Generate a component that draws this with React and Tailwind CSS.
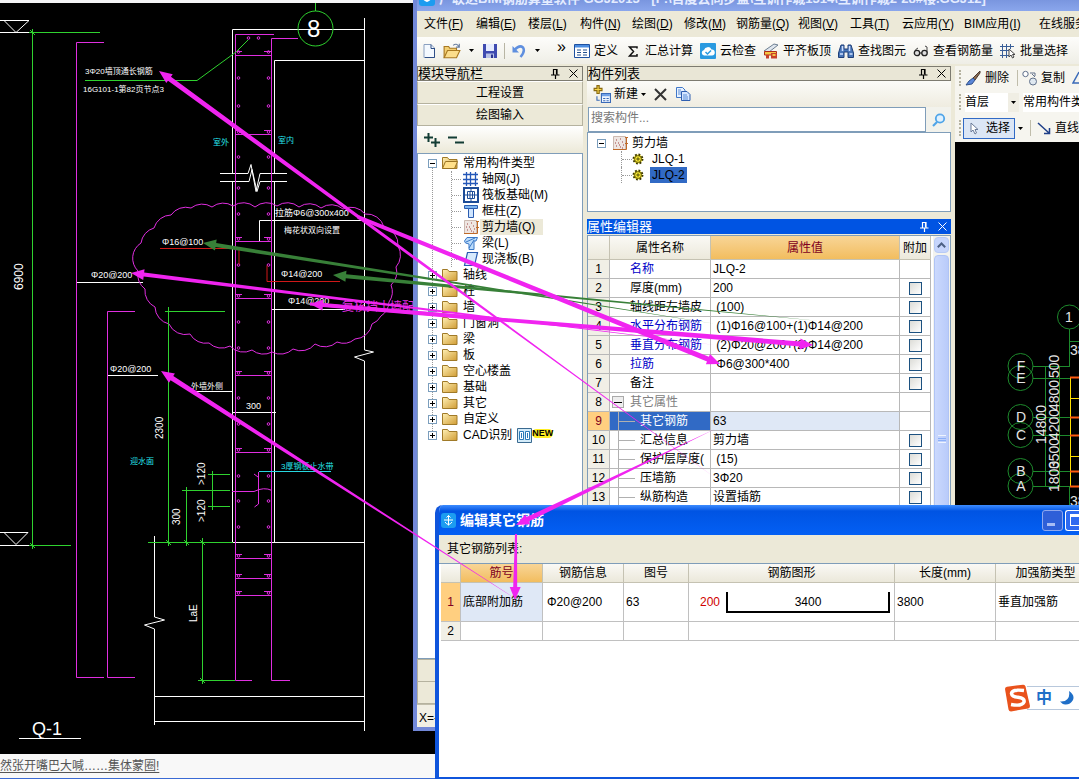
import React, { useState } from "react";

const MENUS = [
  { name: "文件", key: "F" },
  { name: "编辑", key: "E" },
  { name: "楼层", key: "L" },
  { name: "构件", key: "N" },
  { name: "绘图", key: "D" },
  { name: "修改", key: "M" },
  { name: "钢筋量", key: "Q", wide: true },
  { name: "视图", key: "V" },
  { name: "工具", key: "T" },
  { name: "云应用", key: "Y", wide: true },
  { name: "BIM应用", key: "I", widest: true },
  { name: "在线服务", key: "S", widest: true },
];

const COMPONENT_TYPES = [
  { label: "轴网(J)", icon: "grid" },
  { label: "筏板基础(M)", icon: "raft" },
  { label: "框柱(Z)", icon: "column" },
  { label: "剪力墙(Q)", icon: "wall", active: true },
  { label: "梁(L)", icon: "beam" },
  { label: "现浇板(B)", icon: "slab" },
];

const GROUPS = [
  "轴线",
  "柱",
  "墙",
  "门窗洞",
  "梁",
  "板",
  "空心楼盖",
  "基础",
  "其它",
  "自定义",
  "CAD识别",
];

const PROPERTIES = [
  { name: "名称", value: "JLQ-2", blue: true, noCheck: true },
  { name: "厚度(mm)", value: "200" },
  { name: "轴线距左墙皮", value: " (100)" },
  { name: "水平分布钢筋", value: " (1)Φ16@100+(1)Φ14@200", blue: true },
  { name: "垂直分布钢筋", value: " (2)Φ20@200+(2)Φ14@200", blue: true },
  { name: "拉筋", value: " Φ6@300*400", blue: true },
  { name: "备注", value: "" },
  { name: "其它属性", value: "", group: true, noCheck: true },
  { name: "其它钢筋", value: "63", child: true, active: true, noCheck: true },
  { name: "汇总信息", value: "剪力墙", child: true },
  { name: "保护层厚度(", value: " (15)", child: true },
  { name: "压墙筋", value: "3Φ20", child: true },
  { name: "纵筋构造", value: "设置插筋", child: true },
  { name: "插筋信息", value: "", child: true },
];

/* ---------- icons ---------- */

const Icon = ({ children, size = 16 }) => (
  <svg width={size} height={size} viewBox="0 0 16 16" className="shrink-0" aria-hidden="true">
    {children}
  </svg>
);

const NewFileIcon = () => (
  <Icon>
    <path d="M3 1.500h7l3.500 3.500v9.500H3z" fill="#f4f9ff" stroke="#8aa0c0" />
    <path d="M10 1.500v4h3.500M13.500 5v9.500H4" fill="none" stroke="#2f4f87" />
  </Icon>
);

const OpenIcon = () => (
  <Icon size={18}>
    <path d="M1 14V4h4l1 1.500h6V8" fill="#f3cf72" stroke="#a87820" />
    <path d="M1 14l3-6.500h11L12 14z" fill="#fbdd8c" stroke="#a87820" />
    <path d="M9 3q3-2.500 5 1M14.500 1.500V4.500H11.500" fill="none" stroke="#6a7fa0" />
  </Icon>
);

const SaveIcon = () => (
  <Icon>
    <path d="M1 1h14v14H1z" fill="#3f4bb0" />
    <path d="M4 1h8v7H4z" fill="#e6ecff" />
    <path d="M4 10.500h8V15H4z" fill="#b9c2e6" />
    <path d="M9 11.500h2V15H9z" fill="#2a3390" />
  </Icon>
);

const UndoIcon = () => (
  <Icon>
    <path d="M4 6.500Q8.500 1.500 12 4.500Q14.500 8.500 9.500 14" fill="none" stroke="#5f8fdf" strokeWidth="2.500" />
    <path d="M1.500 3v6.500H8z" fill="#5f8fdf" />
  </Icon>
);

const DefineIcon = () => (
  <Icon>
    <path d="M.5 1.500h15v13H.5z" fill="#fff" stroke="#1d50a0" />
    <path d="M1 2h14v2.500H1z" fill="#4b8ce0" />
    <path d="M3 7h4M3 9.500h4M3 12h4M9 7h4M9 9.500h4M9 12h4" stroke="#22508f" />
  </Icon>
);

const CloudIcon = () => (
  <Icon>
    <rect width="16" height="16" rx="1" fill="#2a9ae0" />
    <path d="M4 12.500a2.800 2.800 0 0 1 0-5.500a4 4 0 0 1 7.500-.5a3 3 0 0 1 .5 6z" fill="#fff" />
    <path d="M5.500 9l2 2 3.500-3.500" fill="none" stroke="#2a9ae0" strokeWidth="1.500" />
  </Icon>
);

const AlignSlabIcon = () => (
  <Icon>
    <path d="M1 8L11 1l4 1-9 7z" fill="#dfe6ee" stroke="#6d7f92" />
    <path d="M1.500 8.500h12V12h-12z" fill="#f4c542" stroke="#b02a1a" />
    <path d="M3 12h3v3.500H3zM8 10h6v5.500H8z" fill="#c8402a" />
    <path d="M9.500 11h3v2h-3z" fill="#f4c542" />
  </Icon>
);

const BinocularsIcon = () => (
  <Icon>
    <path d="M3 2h3v4h4V2h3l2.500 8v4.500h-5.500V9H6v5.500H.5V10z" fill="#4775b8" stroke="#1f3f78" />
    <path d="M2 11h3M11.500 11h3M4.500 3v5M11.500 3v5" stroke="#cfe0ff" strokeWidth="1.500" />
  </Icon>
);

const GlassesIcon = () => (
  <Icon>
    <path d="M2 9q0-3 3-4M14 10V4l-2-1" fill="none" stroke="#444" />
    <circle cx="4" cy="10" r="2.700" fill="#ddd" stroke="#222" strokeWidth="1.300" />
    <circle cx="11.500" cy="10" r="2.700" fill="#ddd" stroke="#222" strokeWidth="1.300" />
    <path d="M6.500 10h2.500" stroke="#222" />
  </Icon>
);

const BatchIcon = () => (
  <Icon>
    <path d="M0 3.500h14M0 7.500h9M0 12.500h9M2.500 1v14M6.500 1v14M10.500 1v5" stroke="#3a5f98" />
    <path d="M9 6v8l2-2 1.500 3 1.500-1-1.500-2.500H15z" fill="#fff" stroke="#444" />
  </Icon>
);

const SigmaIcon = () => (
  <Icon>
    <path d="M12 5.500V4H4.500l4 4.500-4 4.500H12v-2" fill="none" stroke="#111" strokeWidth="1.500" />
  </Icon>
);

const AddComponentIcon = () => (
  <Icon size={18}>
    <path d="M3.500.5h2v2.500H8v2H5.500v2.500h-2V5H1V3h2.500z" fill="#f6d64a" stroke="#8a6a10" />
    <path d="M7.500 7.500h8v8h-8z" fill="#eef5ff" stroke="#3a6ab8" />
    <path d="M8 8h7v2H8z" fill="#6ea0e8" />
    <path d="M9 12h2M12 12h2M9 14h2M12 14h2M3.500 10v3.500H6" fill="none" stroke="#3a6ab8" />
  </Icon>
);

const CopyIcon = () => (
  <Icon>
    <path d="M1.500 1.500h6L10 4v7.500H1.500z" fill="#e8f2ff" stroke="#3f77c8" />
    <path d="M6.500 5.500h5.500l3 3v6H6.500z" fill="#d5e6ff" stroke="#2f5fb0" />
    <path d="M8 9h4M8 11h5M8 13h5M3 4h3M3 6h3M3 8h3" stroke="#5c8fd8" />
  </Icon>
);

const FolderIcon = ({ open }) => (
  <Icon>
    <defs>
      <linearGradient id="folderFill" x2="1" y2="1">
        <stop stopColor="#fff0b4" />
        <stop offset="1" stopColor="#d09c34" />
      </linearGradient>
    </defs>
    <path d="M.5 13.500v-11h5l1.500 2h8v9z" fill="url(#folderFill)" stroke="#a07a28" />
    {open && <path d="M.5 13.500l3-7h12l-3 7z" fill="#ffe08a" stroke="#9a7424" />}
  </Icon>
);

const TypeIcon = ({ type }) => {
  if (type === "grid")
    return (
      <Icon>
        <path d="M0 3.500h15M0 8.500h15M0 12.500h15M3.500 1v14M7.500 1v14M12.500 1v14" stroke="#2457b8" strokeWidth="1.300" />
      </Icon>
    );
  if (type === "raft")
    return (
      <Icon>
        <path d="M1 1h14v14H1z" fill="#fff" stroke="#1d4c98" strokeWidth="2" />
        <path d="M4.500 4.500h7v7h-7zM1 8h3.500M11.500 8H15M8 1v3.500M8 11.500V15M7 5v6M9.500 5v6M5 8h6" fill="none" stroke="#1d4c98" />
      </Icon>
    );
  if (type === "column")
    return (
      <Icon>
        <path d="M1.500 2.500h13v3h-13z" fill="#7db4ef" stroke="#2a5cb0" />
        <path d="M5.500 5.500h5v9h-5z" fill="#cfe5ff" stroke="#2a5cb0" />
      </Icon>
    );
  if (type === "wall")
    return (
      <Icon>
        <path d="M1.500 1.500h12v13h-12z" fill="#eee6e2" stroke="#cbb9b0" />
        <path d="M4 5h1M8 4h1M6 8h1M10 7h1M4 11h1M8 12h1M11 10h1M7 10h1M3 8h1M10 13h1" stroke="#a04040" />
        <path d="M1 14.500h13.500V2M13 2.500h3M13 8.500h3" fill="none" stroke="#c06a28" />
      </Icon>
    );
  if (type === "beam")
    return (
      <Icon>
        <path d="M1.500 6L4 2.500h10.500L13 6h-2v8.500H6V9L2.500 8z" fill="#bcdcfa" stroke="#3a78c8" />
        <path d="M3 7l9-4M6 13l5-8" stroke="#3a78c8" />
      </Icon>
    );
  return (
    <Icon>
      <path d="M4.500 1.500h10l-3 13h-10z" fill="#d7eafd" stroke="#2a5cb0" strokeWidth="1.200" />
    </Icon>
  );
};

const GearIcon = () => (
  <Icon size={12}>
    <circle cx="8" cy="8" r="6" fill="#ffee33" stroke="#3a3500" strokeWidth="2.500" strokeDasharray="2.400 2.300" />
    <circle cx="8" cy="8" r="4.500" fill="#ffee33" stroke="#3a3500" />
    <circle cx="8" cy="8" r="1.500" fill="none" stroke="#3a3500" strokeWidth="1.200" />
  </Icon>
);

const PinIcon = () => (
  <svg width="9" height="10" viewBox="0 0 9 10" aria-hidden="true">
    <path d="M2.500 0v5.500M6 0v5.500M2 .5h4.500M0 6h8.500M4.500 6v4M5.500 1v4" fill="none" stroke="currentColor" strokeWidth="1.200" />
  </svg>
);

const CloseIcon = () => (
  <svg width="9" height="9" viewBox="0 0 9 9" aria-hidden="true">
    <path d="M.5.5l8 8M8.500.5l-8 8" stroke="currentColor" />
  </svg>
);

const Caret = () => (
  <svg width="5" height="3" viewBox="0 0 5 3" className="shrink-0" aria-hidden="true">
    <path d="M0 0h5L2.500 3z" fill="#000" />
  </svg>
);

const Expander = ({ open }) => (
  <button
    aria-label={open ? "收起" : "展开"}
    className="relative flex h-[9px] w-[9px] shrink-0 items-center justify-center border border-[#7b9ebd] bg-white"
  >
    <svg width="5" height="5" viewBox="0 0 5 5">
      <path d={open ? "M0 2.500h5" : "M0 2.500h5M2.500 0v5"} stroke="#000" />
    </svg>
  </button>
);

/* ---------- CAD drawing ---------- */

const CLOUD_POINTS = [
  [154, 228], [171, 215], [191, 208], [212, 207], [233, 206], [255, 207], [277, 206],
  [299, 207], [321, 208], [343, 209], [365, 214], [384, 227], [398, 246], [396, 267],
  [391, 285], [389, 302], [381, 316], [372, 324], [355, 339], [337, 342], [315, 344],
  [293, 349], [272, 352], [252, 350], [230, 346], [209, 343], [190, 334], [169, 324],
  [155, 307], [145, 289], [138, 271], [141, 243],
];

const cloudPath =
  CLOUD_POINTS.map(([x, y], i) => (i === 0 ? `M${x} ${y}` : `A18 18 0 0 1 ${x} ${y}`)).join("") +
  "A18 18 0 0 1 154 228";

const DOT_ROWS = [52, 78, 106, 132, 157, 188, 214, 239, 265, 296, 322, 348, 373, 398, 424, 450, 476, 501, 527, 556, 576, 593];
const TIE_ROWS = [55, 134, 241, 298, 375, 452, 558, 578, 595];

const CadDrawing = () => (
  <svg
    width="415"
    height="751"
    viewBox="0 3 415 751"
    fill="none"
    className="font-['Liberation_Sans_Narrow','Liberation_Sans','Noto_Sans_CJK_SC',sans-serif]"
  >
    {/* levels and concrete outline */}
    <g stroke="#fff">
      <path d="M0 20.500h29M4 20.500l12 12 13-12M0 32.500h32M0 532.500h28M4 532.500l12 12 12-12M0 545.500h30" />
      <path d="M232.500 173V29.500H364.500M274.500 173V60.500H364.500M364.500 18V350l9 2-19 5 10 4V731" />
      <path d="M220 173.500h28l3-9 5 27 4-18h27M220 181.500h29l3-12 5 22 3-10h27" />
      <path d="M232.500 182V542M274.500 182V542M154.500 542.500H364.500M154.500 536v81l10 3-20 5 10 4v96M154.500 696.500H364.500M154.500 721.500H364.500" />
      <path d="M77 282.500h66M107 375.500h51M193 391.500h40M232 412.500h44M259.500 241v-20.500H364M272 309.500h73M19 738.500h62" />
    </g>

    {/* rebar */}
    <g stroke="#e02ee0">
      <path d="M104 42.500H76.500V677.500H104M135 311.500H107.500V677.500H135" />
      <path d="M274 34.500H235.500V680.500H252M298 38.500H271.500V680.500H290" />
      {TIE_ROWS.map((y) => (
        <path key={y} d={`M235 ${y}.5h36M235 ${y - 4}.5h7M264 ${y - 4}.5h7`} />
      ))}
      {DOT_ROWS.map((y) => (
        <g key={y}>
          <circle cx="238.500" cy={y} r="1.300" />
          <circle cx="268.500" cy={y} r="1.300" />
        </g>
      ))}
      <circle cx="248.500" cy="38" r="1.300" />
      <circle cx="258.500" cy="38" r="1.300" />
      <path d="M258.500 472v32l-4 3M254 474l4 3M232 491.500h22q10-5 18-1" />
      <path d={cloudPath} />
    </g>
    <path d="M160 248.500h79v16M340 281.500h-73v-16" stroke="#d01818" />

    {/* dimensions */}
    <g stroke="#2fd22f">
      <path d="M32.500 29V549M29 32.500h71M29 545.500h42M30 30l5 5M30 543l5 5" />
      <path d="M168.500 307V546M165 311.500h60M148 542.500h85M212.500 471v39M208 474.500h22M182 490.500h48M208 506.500h22M186.500 487v59M202.500 538v146M198 680.500h37" />
      <path d="M85 80.500h112L236 52l12-12M166 540l5 5M184 540l5 5M200 540l5 5M200 678l5 5" />
      <circle cx="315.500" cy="28.500" r="17.500" />
      <path d="M315.500 3v8" />
    </g>
    <path d="M259 471.500h72" stroke="#27d7e0" />

    <g fill="#fff" fontSize="9">
      <text x="307" y="37" fontSize="24">8</text>
      <text x="85" y="74" fontSize="8">3Φ20墙顶通长钢筋</text>
      <text x="83" y="92" fontSize="8">16G101-1第82页节点3</text>
      <text x="162" y="245">Φ16@100</text>
      <text x="91" y="278">Φ20@200</text>
      <text x="281" y="277">Φ14@200</text>
      <text x="288" y="304">Φ14@200</text>
      <text x="110" y="372">Φ20@200</text>
      <text x="275" y="216">拉筋Φ6@300x400</text>
      <text x="284" y="233" fontSize="8">梅花状双向设置</text>
      <text x="191" y="389" fontSize="8">外墙外侧</text>
      <text x="246" y="409">300</text>
      <text x="32" y="735" fontSize="18">Q-1</text>
      <text fontSize="12" transform="translate(23 290) rotate(-90)">6900</text>
      <text fontSize="10" transform="translate(163 439) rotate(-90)">2300</text>
      <text fontSize="10" transform="translate(180 525) rotate(-90)">300</text>
      <text fontSize="10" transform="translate(205 485) rotate(-90)">&gt;120</text>
      <text fontSize="10" transform="translate(205 522) rotate(-90)">&gt;120</text>
      <text fontSize="10" transform="translate(197 622) rotate(-90)">LaE</text>
    </g>
    <g fill="#27e6ee" fontSize="8">
      <text x="213" y="145">室外</text>
      <text x="278" y="143">室内</text>
      <text x="130" y="464">迎水面</text>
      <text x="281" y="469">3厚钢板止水带</text>
    </g>
    <text x="342" y="311" fontSize="12" fill="#e02ee0">复核挡土墙配</text>
  </svg>
);

const AXES = [
  ["F", 366],
  ["E", 378],
  ["D", 417],
  ["C", 435],
  ["B", 471],
  ["A", 486],
];

const PlanCanvas = () => (
  <svg width="125" height="420" viewBox="954 142 125 420" fill="none" className="font-['Liberation_Sans',sans-serif]">
    <g stroke="#1d8a2c">
      <circle cx="1068.500" cy="317" r="12" />
      <path d="M1068.500 329v37M1068.500 341.500h12M1044.500 366v120M1058.500 366v120M1068.500 486v30" />
      {AXES.map(([name, y]) => (
        <g key={name}>
          <circle cx="1019.500" cy={y} r="12.500" />
          <path d={`M1032 ${y}.5h37`} />
        </g>
      ))}
    </g>
    <g stroke="#ffe000">
      <path d="M1069.500 378v108M1070 398.500h10M1070 456.500h10" />
    </g>
    <path d="M1069 377.500h11M1069 417.500h11M1069 435.500h11M1069 471.500h11M1069 486.500h11" stroke="#ff5a10" strokeWidth="2" />
    <g fill="#e4e4e4" fontSize="14">
      <text x="1064" y="322">1</text>
      {AXES.map(([name, y]) => (
        <text key={name} x="1020" y={y + 5} textAnchor="middle">
          {name}
        </text>
      ))}
      <text x="1069" y="355">3800</text>
      <text x="1069" y="506">3800</text>
      <text transform="translate(1045 444) rotate(-90)">14800</text>
      <text transform="translate(1058 492) rotate(-90)">1800</text>
      <text transform="translate(1058 469) rotate(-90)">3500</text>
      <text transform="translate(1058 440) rotate(-90)">4200</text>
      <text transform="translate(1058 411) rotate(-90)">4800</text>
      <text transform="translate(1058 378) rotate(-90)">500</text>
    </g>
  </svg>
);

/* ---------- annotation arrows ---------- */

// tapered arrow: thin at the tail, `width` wide next to the head
const Arrow = ({ from, to, width = 5, tail = 1, head = 13, color = "#f024f0" }) => {
  const dx = to[0] - from[0];
  const dy = to[1] - from[1];
  const len = Math.hypot(dx, dy);
  const angle = (Math.atan2(dy, dx) * 180) / Math.PI;
  const neck = len - head;
  const half = head / 2 - 1;
  return (
    <path
      transform={`translate(${from[0]} ${from[1]}) rotate(${angle})`}
      d={`M0 ${-tail / 2}L${neck} ${-width / 2}V${-half}L${len} 0L${neck} ${half}V${width / 2}L0 ${tail / 2}z`}
      fill={color}
    />
  );
};

const Annotations = () => (
  <svg width="1079" height="779" viewBox="0 0 1079 779" className="pointer-events-none absolute left-0 top-0 z-20">
    <Arrow from={[820, 321]} to={[333, 275]} color="#388038" width={4} tail={0} />
    <Arrow from={[716, 324]} to={[203, 243]} color="#388038" width={4} tail={0} />
    <Arrow from={[714, 477]} to={[159, 71]} tail={0} />
    <Arrow from={[715, 345]} to={[131, 273]} width={4} tail={0} />
    <Arrow from={[500, 320]} to={[310, 304]} width={4} tail={4} />
    <Arrow from={[310, 304]} to={[813, 345]} tail={3} />
    <Arrow from={[358, 217]} to={[720, 364]} tail={4} />
    <Arrow from={[516, 599]} to={[161, 371]} tail={0} />
    <Arrow from={[715, 429]} to={[516, 525]} tail={0} />
    <Arrow from={[516, 534]} to={[515, 600]} width={4} tail={2} />
  </svg>
);

/* ---------- main window ---------- */

const PanelTitle = ({ children, active }) => (
  <div
    className={
      active
        ? "flex h-[15px] shrink-0 items-center justify-between bg-[#0054e3] pr-1 text-[13px] leading-[15px] text-white"
        : "flex h-[15px] shrink-0 items-center justify-between border border-[#7d7b70] bg-[#e9e6d6] pr-1 text-[13px] leading-[13px]"
    }
  >
    <h2>{children}</h2>
    <span className="flex items-center gap-[9px]">
      <button aria-label="固定">
        <PinIcon />
      </button>
      <button aria-label="关闭">
        <CloseIcon />
      </button>
    </span>
  </div>
);

const ToolButton = ({ icon, children }) => (
  <button className="flex shrink-0 items-center gap-1 whitespace-nowrap">
    {icon}
    {children}
  </button>
);

const MainToolbar = () => (
  <div className="flex h-[27px] shrink-0 items-center bg-gradient-to-b from-[#fdfdfb] to-[#efeee6] pl-1">
    <div className="flex w-[153px] shrink-0 items-center">
      <button aria-label="新建" className="mr-[6px]"><NewFileIcon /></button>
      <button aria-label="打开" className="mr-2"><OpenIcon /></button>
      <Caret />
      <button aria-label="保存" className="ml-2 border-r border-[#b8b5a4] pr-[6px]"><SaveIcon /></button>
      <button aria-label="撤销" className="ml-[6px] mr-2"><UndoIcon /></button>
      <Caret />
      <span className="ml-[17px] pb-2 text-base leading-4">»</span>
    </div>
    <div className="flex items-center gap-[7px]">
      <ToolButton icon={<DefineIcon />}>定义</ToolButton>
      <ToolButton icon={<SigmaIcon />}>汇总计算</ToolButton>
      <ToolButton icon={<CloudIcon />}>云检查</ToolButton>
      <ToolButton icon={<AlignSlabIcon />}>平齐板顶</ToolButton>
      <ToolButton icon={<BinocularsIcon />}>查找图元</ToolButton>
      <ToolButton icon={<GlassesIcon />}>查看钢筋量</ToolButton>
      <ToolButton icon={<BatchIcon />}>批量选择</ToolButton>
    </div>
  </div>
);

const Navigator = () => (
  <aside className="flex w-[166px] shrink-0 flex-col">
    <PanelTitle>模块导航栏</PanelTitle>
    <button className="h-[23px] shrink-0 border border-[#b5b29f] border-t-white bg-[#ece9d8]">工程设置</button>
    <button className="h-[22px] shrink-0 border border-[#b5b29f] border-t-white bg-[#ece9d8]">绘图输入</button>
    <div className="flex h-[27px] shrink-0 items-center gap-2 bg-gradient-to-b from-white to-[#ece9d8] pl-[7px]">
      <button aria-label="全部展开">
        <svg width="16" height="14" viewBox="0 0 16 14">
          <path d="M0 4.500h9M4.500 0v9M7 9.500h9M11.500 5v9" stroke="#123c34" strokeWidth="2" />
        </svg>
      </button>
      <button aria-label="全部收起">
        <svg width="16" height="14" viewBox="0 0 16 14">
          <path d="M0 4.500h9M7 9.500h9" stroke="#123c34" strokeWidth="2" />
        </svg>
      </button>
    </div>
    <div className="min-h-0 flex-1 border border-[#7f9db9] bg-white pl-[2px] pt-px">
      <ul className="relative before:absolute before:bottom-2 before:left-[12px] before:top-2 before:border-l before:border-dotted before:border-[#999]">
        <li>
          <div className="flex h-4 items-center gap-[5px] pl-2">
            <Expander open />
            <FolderIcon open />
            常用构件类型
          </div>
          <ul className="ml-[31px] border-l border-dotted border-[#999]">
            {COMPONENT_TYPES.map((t) => (
              <li key={t.label} className="flex h-4 items-center">
                <span className="mr-[2px] w-[9px] border-t border-dotted border-[#999]" />
                <TypeIcon type={t.icon} />
                <a
                  href="#"
                  className={t.active ? "ml-px bg-[#ece9d8] px-[2px] pr-2 leading-4" : "ml-px px-[2px] leading-4"}
                >
                  {t.label}
                </a>
              </li>
            ))}
          </ul>
        </li>
        {GROUPS.map((g) => (
          <li key={g} className="flex h-4 items-center gap-[5px] pl-2">
            <Expander />
            <FolderIcon />
            {g}
            {g === "CAD识别" && (
              <span className="flex items-center">
                <svg width="15" height="15" viewBox="0 0 15 15">
                  <path d="M.5.5h14v14H.5z" fill="#d4ecfa" stroke="#3a6a90" />
                  <path d="M2.500 3.500h4v8h-4zM8.500 3.500h4v8h-4zM4.500 5v5M10.500 5v5" fill="#fff" stroke="#2a7ab8" />
                </svg>
                <span className="mb-1 rounded-full bg-[#ffee22] text-[9px] font-bold leading-[9px]">NEW</span>
              </span>
            )}
          </li>
        ))}
      </ul>
    </div>
    <button aria-label="单构件输入" className="h-[23px] shrink-0 border border-[#b5b29f] bg-[#ece9d8]" />
    <button aria-label="报表预览" className="h-[22px] shrink-0 border border-[#b5b29f] border-t-0 bg-[#ece9d8]" />
  </aside>
);

const ComponentList = () => (
  <>
    <PanelTitle>构件列表</PanelTitle>
    <div className="flex h-[26px] shrink-0 items-center gap-2 bg-gradient-to-b from-[#fbfbf8] to-[#efece0] pl-[6px]">
      <button className="flex items-center gap-[3px]">
        <AddComponentIcon />
        新建
        <Caret />
      </button>
      <button aria-label="删除">
        <svg width="13" height="13" viewBox="0 0 13 13">
          <path d="M1 1l11 11M12 1L1 12" stroke="#333" strokeWidth="2" />
        </svg>
      </button>
      <button aria-label="复制构件">
        <CopyIcon />
      </button>
    </div>
    <div className="flex h-[25px] shrink-0">
      <input
        aria-label="搜索构件"
        placeholder="搜索构件..."
        className="ml-px min-w-0 flex-1 border border-[#7f9db9] bg-white px-[2px] pb-1 text-xs placeholder:text-[#777]"
      />
      <button aria-label="搜索" className="flex w-[25px] items-center justify-center bg-[#f2f2ec]">
        <svg width="14" height="14" viewBox="0 0 14 14">
          <circle cx="8" cy="5.500" r="4.200" fill="#dff1ff" stroke="#4fa4e8" strokeWidth="1.800" />
          <path d="M5 9l-4 4" stroke="#4fa4e8" strokeWidth="2.200" />
        </svg>
      </button>
    </div>
    <ul className="h-[80px] shrink-0 border border-[#7f9db9] bg-white pl-[9px] pt-[2px]">
      <li className="flex h-4 items-center">
        <Expander open />
        <span className="ml-[6px] mr-1">
          <TypeIcon type="wall" />
        </span>
        剪力墙
      </li>
      {["JLQ-1", "JLQ-2"].map((name) => (
        <li key={name} className="ml-6 flex h-4 items-center border-l border-dotted border-[#999]">
          <span className="w-[10px] border-t border-dotted border-[#999]" />
          <GearIcon />
          <a href="#" className={name === "JLQ-2" ? "ml-[6px] bg-[#316ac5] px-[2px] leading-4" : "ml-[6px] px-[2px] leading-4"}>
            {name}
          </a>
        </li>
      ))}
    </ul>
  </>
);

const PropertyRow = ({ row, index, checked, onToggle }) => {
  let nameCell = "border-b border-r border-[#b8b8b8] pl-5";
  if (row.blue) nameCell += " text-[#0000c8]";
  if (row.group) nameCell = "border-b border-r border-[#b8b8b8] pl-[2px] text-[#808080]";
  if (row.child) nameCell = "border-b border-r border-[#b8b8b8] pl-2";
  if (row.active) nameCell += " bg-[#316ac5] text-white";

  return (
    <tr className="h-[19px]">
      <th
        scope="row"
        className={
          row.active
            ? "border-b border-r border-[#b8b8b8] bg-[#ffcf80] font-normal text-[#800020]"
            : "border-b border-r border-[#b8b8b8] bg-[#f1efe6] font-normal"
        }
      >
        {index + 1}
      </th>
      <td className={nameCell}>
        <div className="flex h-[18px] items-center overflow-hidden whitespace-nowrap">
          {row.group && (
            <button aria-label="收起" className="mr-[6px] flex h-3 w-3 items-center justify-center border border-[#aaa] bg-[#eee]">
              <span className="h-px w-2 bg-black" />
            </button>
          )}
          {row.child && (
            <span className="mr-[5px] flex h-full w-[17px] shrink-0 items-center border-l border-[#b0b0b0]">
              <span className="w-full border-t border-[#b0b0b0]" />
            </span>
          )}
          {row.name}
        </div>
      </td>
      <td
        className={
          row.active
            ? "whitespace-pre border-b border-r border-[#b8b8b8] bg-[#dfe8f6] pl-[2px]"
            : "whitespace-pre border-b border-r border-[#b8b8b8] pl-[2px]"
        }
      >
        {row.value}
      </td>
      <td className="border-b border-r border-[#b8b8b8]">
        {!row.noCheck && (
          <input
            type="checkbox"
            aria-label={`附加 ${row.name}`}
            checked={checked}
            onChange={onToggle}
            className="mx-auto block h-[13px] w-[13px] appearance-none border border-[#1c5180] bg-gradient-to-br from-[#dcdcd7] to-white checked:bg-[#21a121]"
          />
        )}
      </td>
    </tr>
  );
};

const PropertyEditor = () => {
  const [extra, setExtra] = useState({});

  const toggle = (name) => setExtra({ ...extra, [name]: !extra[name] });

  return (
    <div className="mt-[7px] flex min-h-0 flex-1 flex-col">
      <PanelTitle active>属性编辑器</PanelTitle>
      <div className="mt-px flex min-h-0 flex-1 overflow-hidden border border-[#7f9db9] bg-white">
        <div className="min-w-0 flex-1">
          <table className="w-full table-fixed border-separate border-spacing-0 leading-4">
            <colgroup>
              <col className="w-[22px]" />
              <col className="w-[101px]" />
              <col />
              <col className="w-[31px]" />
            </colgroup>
            <thead>
              <tr className="h-[24px] bg-gradient-to-b from-[#faf9f5] to-[#ebe8da]">
                <th aria-label="序号" className="border-b border-r border-[#c5c2b2]" />
                <th className="border-b border-r border-[#c5c2b2] font-normal">属性名称</th>
                <th className="border-b border-r border-[#c5c2b2] bg-gradient-to-b from-[#f8d596] to-[#f2bd5e] font-normal text-[#800020]">
                  属性值
                </th>
                <th className="whitespace-nowrap border-b border-r border-[#c5c2b2] font-normal">附加</th>
              </tr>
            </thead>
            <tbody>
              {PROPERTIES.map((row, i) => (
                <PropertyRow
                  key={row.name}
                  row={row}
                  index={i}
                  checked={!!extra[row.name]}
                  onToggle={() => toggle(row.name)}
                />
              ))}
            </tbody>
          </table>
        </div>
        <div className="ml-[2px] flex w-[17px] flex-col bg-[#f3f3ee] px-px pt-px">
          <button aria-label="向上滚动" className="flex h-4 items-center justify-center rounded-sm border border-[#b7caf5] bg-[#c6d5fc]">
            <svg width="9" height="6" viewBox="0 0 9 6">
              <path d="M.8 5.200l3.700-3.700 3.700 3.700" fill="none" stroke="#4d6185" strokeWidth="2" />
            </svg>
          </button>
          <div className="mt-[2px] flex flex-1 justify-center rounded-sm border border-[#b0c4f4] bg-gradient-to-r from-[#cbd9fd] to-[#b9cbfa] pt-[179px]">
            <span className="h-2 w-2 border-y border-[#eef4fe]">
              <span className="mt-[2px] block h-[3px] border-y border-[#8cb0f8]" />
            </span>
          </div>
        </div>
      </div>
    </div>
  );
};

const Grip = () => <span className="h-4 shrink-0 border-l-2 border-dotted border-[#b5b2a0]" />;

const DrawingPane = () => (
  <section className="flex min-w-0 flex-1 flex-col overflow-hidden">
    <div className="flex h-[24px] shrink-0 items-center whitespace-nowrap bg-[#f6f5ef] pl-1">
      <Grip />
      <button className="ml-1 flex shrink-0 items-center gap-1">
        <Icon>
          <path d="M15 1l-7 7 2 2 5-7z" fill="#8a6a50" stroke="#4a3a30" />
          <path d="M8 8l2 2-3 4-6 1 3-4z" fill="#5a86d8" stroke="#30508a" />
        </Icon>
        删除
      </button>
      <button className="ml-2 flex shrink-0 items-center gap-[3px] border-l border-[#c0bdab] pl-1">
        <Icon>
          <circle cx="3.500" cy="4" r="2.700" fill="#fff" stroke="#60708a" />
          <circle cx="11" cy="11.500" r="3.500" fill="#dfe8f0" stroke="#60708a" />
          <path d="M8 3h5v3M10 4l3 3" fill="none" stroke="#60708a" />
        </Icon>
        复制
      </button>
      <svg width="16" height="16" viewBox="0 0 16 16" className="ml-[7px] shrink-0">
        <path d="M7 2L1 13h10" fill="none" stroke="#3a6ab8" strokeWidth="1.500" />
      </svg>
    </div>
    <div className="flex h-[24px] shrink-0 items-center whitespace-nowrap bg-[#f6f5ef] pl-1">
      <Grip />
      <select aria-label="楼层" className="ml-1 h-[19px] w-[43px] shrink-0 appearance-none bg-white">
        <option>首层</option>
      </select>
      <span className="flex h-[19px] w-[11px] shrink-0 items-center justify-center bg-[#f0eee4]">
        <Caret />
      </span>
      <select aria-label="构件类型" className="ml-1 h-[19px] w-[90px] shrink-0 appearance-none bg-white">
        <option>常用构件类型</option>
      </select>
    </div>
    <div className="flex h-[28px] shrink-0 items-center whitespace-nowrap bg-[#f6f5ef] pl-1">
      <Grip />
      <button className="ml-[2px] flex h-[21px] shrink-0 items-center gap-[6px] border border-[#316ac5] bg-[#dce6f5] pl-[5px] pr-1">
        <svg width="11" height="13" viewBox="0 0 11 13">
          <path d="M2 1v9l2-2 2 4 1.500-1L6 7.500h3z" fill="#fff" stroke="#6a7a98" />
        </svg>
        选择
      </button>
      <span className="mx-[3px]">
        <Caret />
      </span>
      <button className="ml-1 flex shrink-0 items-center gap-1 border-l border-[#c0bdab] pl-[6px]">
        <svg width="14" height="13" viewBox="0 0 14 13">
          <path d="M1 1l11 10M12.500 6v5.500H7" fill="none" stroke="#1f3f88" strokeWidth="1.500" />
        </svg>
        直线
      </button>
    </div>
    <div className="min-h-0 flex-1 overflow-hidden bg-black">
      <PlanCanvas />
    </div>
  </section>
);

const MainWindow = () => (
  <div className="absolute left-[413px] right-0 top-0 flex h-[731px] flex-col overflow-hidden border-b-4 border-l-4 border-[#7288d8] bg-[#ece9d8]">
    <header className="flex h-[11px] shrink-0 items-end overflow-hidden bg-gradient-to-b from-[#7a96df] to-[#8aa6ec] pb-[5px] pl-[2px] font-bold text-[#e4ecff]">
      <svg width="16" height="16" viewBox="0 0 16 16" className="shrink-0">
        <rect width="16" height="16" rx="3" fill="#1c9cf0" />
        <path d="M8 3v9M4 8q4 6 8 0" fill="none" stroke="#fff" strokeWidth="1.500" />
      </svg>
      <h1 className="ml-1 whitespace-pre text-[13px] leading-[15px]">
        广联达BIM钢筋算量软件 GGJ2013 - [F:\百度云同步盘\互训作城1314\互训作城2-28#楼.GGJ12]
      </h1>
    </header>
    <nav className="flex h-[26px] shrink-0 items-center overflow-hidden pl-[7px]">
      {MENUS.map((m) => (
        <button
          key={m.name}
          className={
            m.widest
              ? "w-[75px] shrink-0 whitespace-nowrap text-left"
              : m.wide
                ? "w-[62px] shrink-0 whitespace-nowrap text-left"
                : "w-[52px] shrink-0 whitespace-nowrap text-left"
          }
        >
          {m.name}(<u>{m.key}</u>)
        </button>
      ))}
    </nav>
    <MainToolbar />
    <div className="mt-[2px] flex min-h-0 flex-1">
      <Navigator />
      <section className="mx-1 flex w-[364px] shrink-0 flex-col">
        <ComponentList />
        <PropertyEditor />
      </section>
      <DrawingPane />
    </div>
    <footer className="h-[23px] shrink-0 border-t border-[#c0bdab] bg-[#f1efe4] px-[2px] leading-[26px]">X=-</footer>
  </div>
);

/* ---------- dialog ---------- */

const headCell = "border-b border-r border-[#c5c2b2] bg-gradient-to-b from-[#faf9f5] to-[#ebe8da] font-normal";
const bodyCell = "border-b border-r border-[#c0c0c0] pl-[2px]";

const RebarDialog = () => (
  <div
    role="dialog"
    aria-labelledby="rebar-title"
    className="absolute bottom-0 left-[435px] right-0 top-[505px] z-10 flex flex-col overflow-hidden rounded-tl-lg border-b-2 border-l-4 border-[#0f55dc] bg-white"
  >
    <div className="flex h-[30px] shrink-0 items-center bg-gradient-to-b from-[#3c8cff] via-[#0054e3] via-20% to-[#0460f4] pl-[2px]">
      <svg width="15" height="15" viewBox="0 0 15 15">
        <rect width="15" height="15" rx="3" fill="#1c9cf0" />
        <path d="M7.500 2.500v10M3 7h9M4 9q3.500 5 7 0M5.500 4.500l2-2 2 2" fill="none" stroke="#fff" />
      </svg>
      <h2 id="rebar-title" className="ml-1 flex-1 text-sm font-bold text-white">
        编辑其它钢筋
      </h2>
      <button aria-label="最小化" className="flex h-[21px] w-[21px] items-end rounded-[3px] border border-[#8fa8ee] bg-[#2f5fd8] p-1">
        <span className="h-[3px] w-2 bg-[#a8bcf4]" />
      </button>
      <button aria-label="最大化" className="ml-[2px] flex h-[21px] w-[14px] items-center overflow-hidden rounded-l-[3px] border border-r-0 border-white bg-[#2f6af0] pl-1">
        <span className="h-3 w-3 shrink-0 border border-t-[3px] border-white" />
      </button>
    </div>
    <p className="h-[28px] shrink-0 bg-[#ece9d8] pl-2 leading-[28px]">其它钢筋列表:</p>
    <div className="shrink-0 overflow-hidden border-t border-[#7f9db9] pl-[2px]">
      <table className="w-full table-fixed border-separate border-spacing-0 whitespace-nowrap leading-4">
        <colgroup>
          <col className="w-[20px]" />
          <col className="w-[82px]" />
          <col className="w-[81px]" />
          <col className="w-[65px]" />
          <col />
          <col className="w-[101px]" />
          <col className="w-[83px]" />
        </colgroup>
        <thead>
          <tr className="h-[19px]">
            <th aria-label="序号" className={headCell} />
            <th className="border-b border-r border-[#c5c2b2] bg-gradient-to-b from-[#f8d596] to-[#f2bd5e] font-normal text-[#800020]">
              筋号
            </th>
            <th className={headCell}>钢筋信息</th>
            <th className={headCell}>图号</th>
            <th className={headCell}>钢筋图形</th>
            <th className={headCell}>长度(mm)</th>
            <th className="border-b border-[#c5c2b2] bg-gradient-to-b from-[#faf9f5] to-[#ebe8da] pl-4 font-normal">加强筋类型</th>
          </tr>
        </thead>
        <tbody>
          <tr className="h-[39px]">
            <th scope="row" className="border-b border-r border-[#c0c0c0] bg-[#ffcf80] font-normal text-[#800020]">
              1
            </th>
            <td className="border-b border-r border-[#c0c0c0] bg-[#dfe8f6] pl-[2px]">底部附加筋</td>
            <td className="border-b border-r border-[#c0c0c0] pl-1">Φ20@200</td>
            <td className={bodyCell}>63</td>
            <td className="border-b border-r border-[#c0c0c0] pl-[11px] pr-1">
              <div className="flex items-center">
                <span className="w-[26px] shrink-0 text-[#d00000]">200</span>
                <span className="h-[21px] flex-1 border-2 border-t-0 border-black text-center leading-5">3400</span>
              </div>
            </td>
            <td className={bodyCell}>3800</td>
            <td className="border-b border-[#c0c0c0] pl-[2px]">垂直加强筋</td>
          </tr>
          <tr className="h-[19px]">
            <th scope="row" className="border-b border-r border-[#c0c0c0] bg-[#f1efe6] font-normal">
              2
            </th>
            <td className={bodyCell} />
            <td className={bodyCell} />
            <td className={bodyCell} />
            <td className={bodyCell} />
            <td className={bodyCell} />
            <td className="border-b border-[#c0c0c0]" />
          </tr>
        </tbody>
      </table>
    </div>
  </div>
);

const ImeBar = () => (
  <div className="absolute right-0 top-[684px] z-10 flex w-[76px] items-center">
    <svg width="28" height="28" viewBox="0 0 28 28" className="relative z-10 shrink-0">
      <path d="M2 5Q2 3 4 2.700L20 .7Q22 .5 22.500 2.500L27 22Q27 24 25 24.500L8 27.500Q6 27.500 5.500 25.500z" fill="#e9521c" />
      <path d="M21 6.500Q9 5 8.500 9.500Q9 13 15 13.200Q22 14 21 18Q19 22.500 8 20.500" fill="none" stroke="#fff" strokeWidth="3.500" />
    </svg>
    <div className="-ml-1 flex h-6 flex-1 items-center gap-2 border-y border-[#b8c8dc] bg-white pl-[9px]">
      <button className="text-base font-bold leading-4 text-[#1f6fc8]">中</button>
      <svg width="14" height="14" viewBox="0 0 14 14" className="shrink-0">
        <path d="M9 0Q15 4 13 9Q10 14 5 13.500Q2 13 0 10.500Q5 11 7.500 8Q10 5 9 0z" fill="#1f6fc8" />
      </svg>
    </div>
  </div>
);

const App = () => {
  return (
    <div className="relative h-screen overflow-hidden font-['Liberation_Sans','Noto_Sans_CJK_SC',sans-serif] text-xs text-black">
      <div className="flex h-full flex-col border-b border-[#3a6ad4] bg-[#f4f4f6] pt-[3px]">
        <div className="min-h-0 flex-1 overflow-hidden bg-black">
          <CadDrawing />
        </div>
        <div className="h-[24px] shrink-0 bg-[#f8f8f8] leading-[24px]">
          <a href="#" className="text-[#555] underline underline-offset-2">
            然张开嘴巴大喊……集体蒙圈!
          </a>
        </div>
      </div>
      <MainWindow />
      <RebarDialog />
      <ImeBar />
      <Annotations />
    </div>
  );
};

export default App;
